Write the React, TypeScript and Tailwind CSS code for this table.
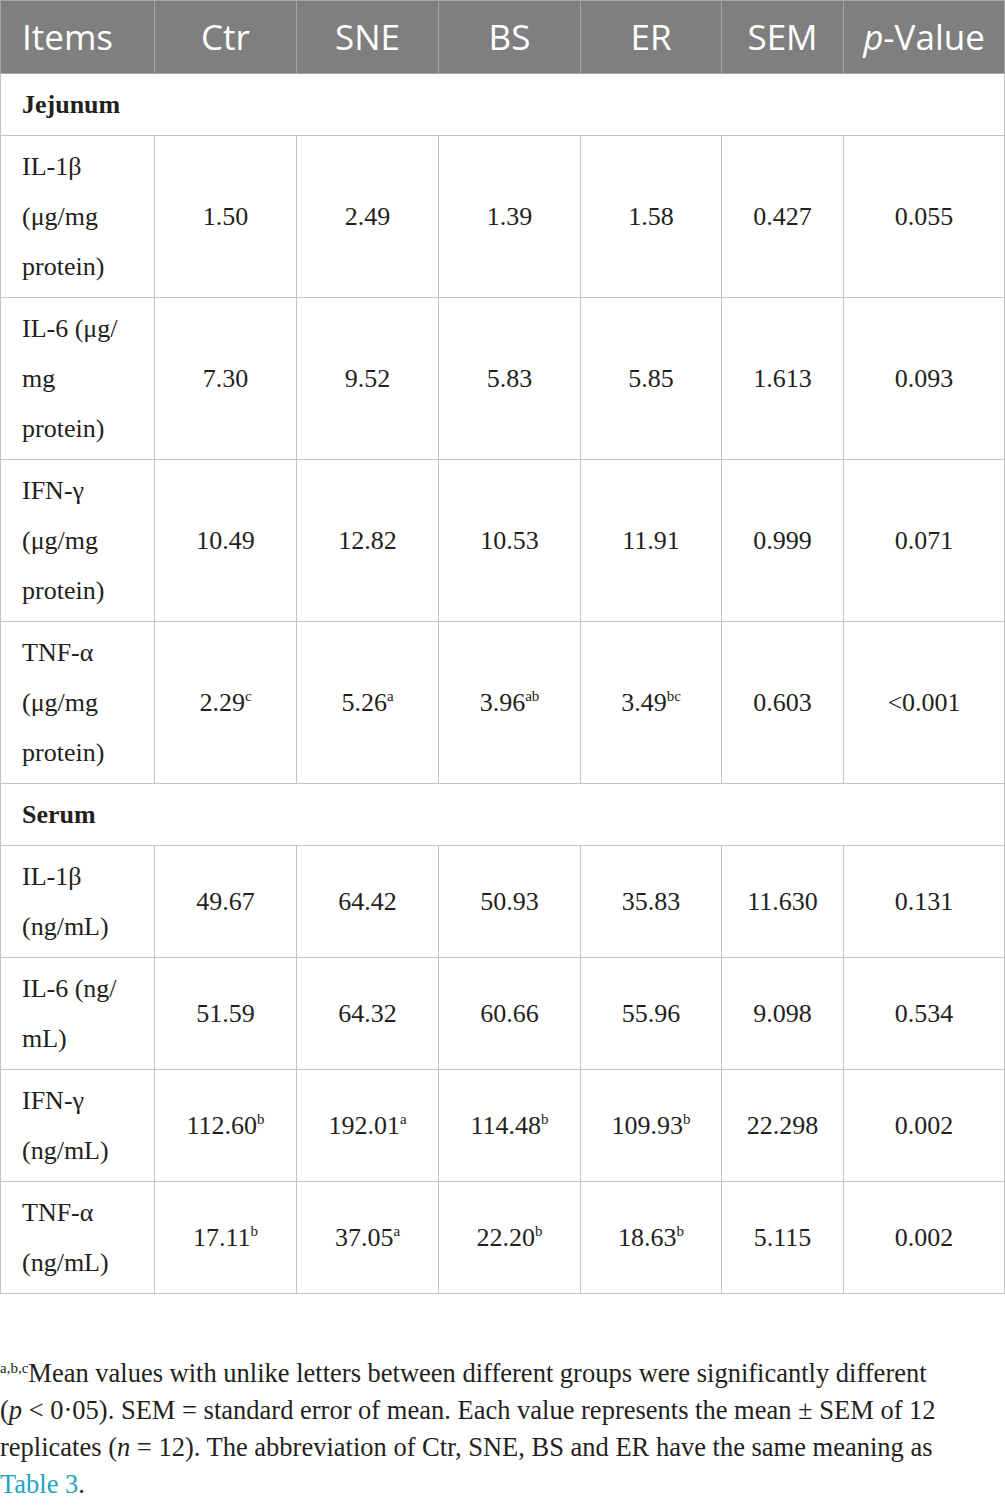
import React from 'react';

type Cell = { v: string; sup?: string };
type Row = { label: string[]; cells: Cell[] };

const jejunum: Row[] = [
  {
    label: ['IL-1β', '(μg/mg', 'protein)'],
    cells: [{ v: '1.50' }, { v: '2.49' }, { v: '1.39' }, { v: '1.58' }, { v: '0.427' }, { v: '0.055' }],
  },
  {
    label: ['IL-6 (μg/', 'mg', 'protein)'],
    cells: [{ v: '7.30' }, { v: '9.52' }, { v: '5.83' }, { v: '5.85' }, { v: '1.613' }, { v: '0.093' }],
  },
  {
    label: ['IFN-γ', '(μg/mg', 'protein)'],
    cells: [{ v: '10.49' }, { v: '12.82' }, { v: '10.53' }, { v: '11.91' }, { v: '0.999' }, { v: '0.071' }],
  },
  {
    label: ['TNF-α', '(μg/mg', 'protein)'],
    cells: [
      { v: '2.29', sup: 'c' },
      { v: '5.26', sup: 'a' },
      { v: '3.96', sup: 'ab' },
      { v: '3.49', sup: 'bc' },
      { v: '0.603' },
      { v: '<0.001' },
    ],
  },
];

const serum: Row[] = [
  {
    label: ['IL-1β', '(ng/mL)'],
    cells: [{ v: '49.67' }, { v: '64.42' }, { v: '50.93' }, { v: '35.83' }, { v: '11.630' }, { v: '0.131' }],
  },
  {
    label: ['IL-6 (ng/', 'mL)'],
    cells: [{ v: '51.59' }, { v: '64.32' }, { v: '60.66' }, { v: '55.96' }, { v: '9.098' }, { v: '0.534' }],
  },
  {
    label: ['IFN-γ', '(ng/mL)'],
    cells: [
      { v: '112.60', sup: 'b' },
      { v: '192.01', sup: 'a' },
      { v: '114.48', sup: 'b' },
      { v: '109.93', sup: 'b' },
      { v: '22.298' },
      { v: '0.002' },
    ],
  },
  {
    label: ['TNF-α', '(ng/mL)'],
    cells: [
      { v: '17.11', sup: 'b' },
      { v: '37.05', sup: 'a' },
      { v: '22.20', sup: 'b' },
      { v: '18.63', sup: 'b' },
      { v: '5.115' },
      { v: '0.002' },
    ],
  },
];

const headers = ['Ctr', 'SNE', 'BS', 'ER', 'SEM'];

const DataRow = ({ row }: { row: Row }) => (
  <tr>
    <td className="border border-[#c4c4c4] pl-[21px] pr-1 pt-[6px] pb-[5px] align-top">
      {row.label.map((l, i) => (
        <div key={i} className="whitespace-nowrap">
          {l}
        </div>
      ))}
    </td>
    {row.cells.map((c, i) => (
      <td key={i} className="border border-[#c4c4c4] text-center align-middle whitespace-nowrap">
        {c.v}
        {c.sup && <sup className="text-[15px] -top-[10px] leading-none">{c.sup}</sup>}
      </td>
    ))}
  </tr>
);

const SectionRow = ({ title }: { title: string }) => (
  <tr>
    <td colSpan={7} className="border border-[#c4c4c4] pl-[21px] pt-[6px] pb-[5px] font-bold">
      {title}
    </td>
  </tr>
);

export default function App() {
  return (
    <div className="w-[1005px] bg-white text-[#231f20] font-['Liberation_Serif',serif]">
      <table className="w-[1004px] border-collapse table-fixed text-[26px] leading-[50px]">
        <colgroup>
          <col className="w-[154px]" />
          <col className="w-[142px]" />
          <col className="w-[142px]" />
          <col className="w-[142px]" />
          <col className="w-[141px]" />
          <col className="w-[122px]" />
          <col className="w-[161px]" />
        </colgroup>
        <thead>
          <tr className="bg-[#7f7f7f] text-white font-['Open_Sans',sans-serif] text-[35px] h-[73px]">
            <th className="border border-[#a6a6a6] text-left pl-[21px] font-normal">Items</th>
            {headers.map((h) => (
              <th key={h} className="border border-[#a6a6a6] text-center font-normal">
                {h}
              </th>
            ))}
            <th className="border border-[#a6a6a6] text-center font-normal">
              <span className="italic">p</span>-Value
            </th>
          </tr>
        </thead>
        <tbody>
          <SectionRow title="Jejunum" />
          {jejunum.map((r, i) => (
            <DataRow key={i} row={r} />
          ))}
          <SectionRow title="Serum" />
          {serum.map((r, i) => (
            <DataRow key={i} row={r} />
          ))}
        </tbody>
      </table>

      <div className="mt-[61px] text-[26.5px] leading-[37px] pb-4">
        <div className="whitespace-nowrap">
          <sup className="text-[15px] -top-[9px] leading-none">a,b,c</sup>Mean values with unlike letters between different groups were significantly different
        </div>
        <div className="whitespace-nowrap">
          (<span className="italic">p</span> &lt; 0·05). SEM = standard error of mean. Each value represents the mean ± SEM of 12
        </div>
        <div className="whitespace-nowrap">
          replicates (<span className="italic">n</span> = 12). The abbreviation of Ctr, SNE, BS and ER have the same meaning as
        </div>
        <div>
          <span className="text-[#1fa4c2]">Table 3</span>.
        </div>
      </div>
    </div>
  );
}
